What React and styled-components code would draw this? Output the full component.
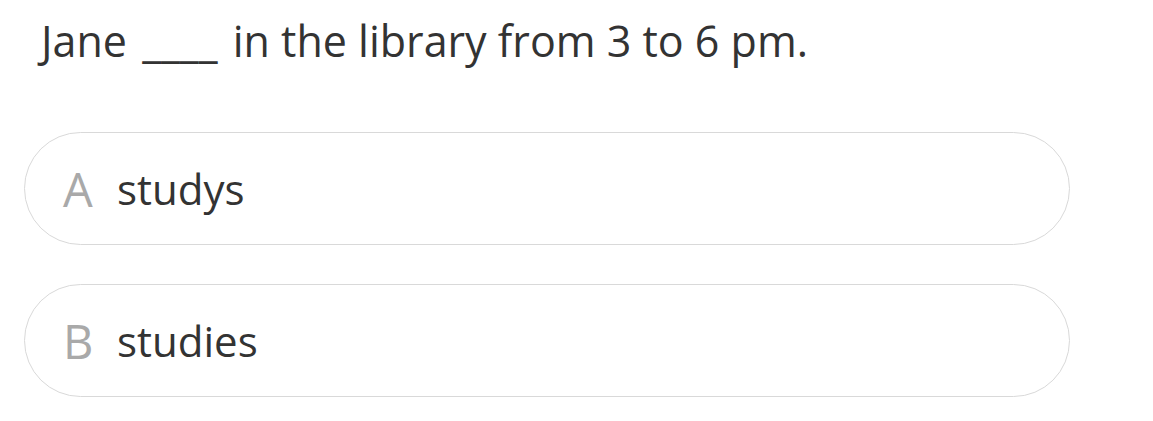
import React from "react";
import styled, { createGlobalStyle } from "styled-components";

const GlobalStyle = createGlobalStyle`
  html, body {
    margin: 0;
    padding: 0;
    background: #fff;
  }
  body {
    font-family: "Open Sans", "Noto Sans", sans-serif;
    color: #333;
  }
`;

const Page = styled.div({
  display: "flex",
  flexDirection: "column",
  padding: "11px 83px 0 24px",
  width: "1046px"
});

const Question = styled.div({
  fontSize: "43px",
  lineHeight: "60px",
  paddingLeft: "17px",
  color: "#333",
  marginBottom: "61px"
});

const Blank = styled.span({
  margin: "0 4px"
});

const Options = styled.div({
  display: "flex",
  flexDirection: "column",
  gap: "39px"
});

const Option = styled.div({
  display: "flex",
  alignItems: "center",
  height: "111px",
  border: "1px solid #d9d9d9",
  borderRadius: "57px",
  padding: "0 0 0 38px",
  boxSizing: "content-box"
});

const Letter = styled.span({
  color: "#a9a9a9",
  fontSize: "47px",
  width: "54px"
});

const Answer = styled.span({
  fontSize: "42px",
  color: "#333"
});

const options = [
  { key: "A", text: "studys" },
  { key: "B", text: "studies" }
];

export default function App() {
  return (
    <Page>
      <GlobalStyle />
      <Question>
        Jane <Blank>____</Blank> in the library from 3 to 6 pm.
      </Question>
      <Options>
        {options.map(o => (
          <Option key={o.key}>
            <Letter>{o.key}</Letter>
            <Answer>{o.text}</Answer>
          </Option>
        ))}
      </Options>
    </Page>
  );
}
